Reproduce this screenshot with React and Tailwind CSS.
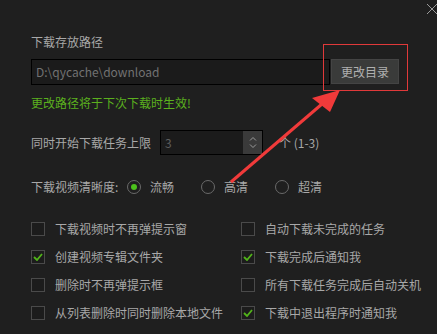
import React from 'react';

const font = { fontFamily: '"Noto Sans CJK SC", "Liberation Sans", sans-serif' };

const Check = ({ checked, label }) => (
  <div className="flex items-center h-[28px]">
    <div className="w-[14px] h-[14px] border border-[#4a4a4a] bg-[#1c1c1c] flex items-center justify-center shrink-0">
      {checked && (
        <svg width="10" height="8" viewBox="0 0 10 8">
          <path d="M1 4l3 3 5-6" fill="none" stroke="#52b41a" strokeWidth="1.8" />
        </svg>
      )}
    </div>
    <span className="ml-[10px] text-[12px] leading-4 text-[#a8a8a8] whitespace-nowrap">{label}</span>
  </div>
);

const Radio = ({ checked, label }) => (
  <div className="flex items-center">
    <div className="w-[14px] h-[14px] rounded-full border-[1.5px] border-[#6a6a6a] flex items-center justify-center">
      {checked && <div className="w-[6px] h-[6px] rounded-full bg-[#4cc21c]" />}
    </div>
    <span className="ml-[9px] text-[12px] leading-4 text-[#a8a8a8]">{label}</span>
  </div>
);

export default function App() {
  const left = ['下载视频时不再弹提示窗', '创建视频专辑文件夹', '删除时不再弹提示框', '从列表删除时同时删除本地文件'];
  const right = ['自动下载未完成的任务', '下载完成后通知我', '所有下载任务完成后自动关机', '下载中退出程序时通知我'];
  const leftOn = [false, true, false, false];
  const rightOn = [false, true, false, true];

  return (
    <div className="relative w-[437px] h-[334px] overflow-hidden bg-[#1f1f1f]" style={font}>
      {/* close */}
      <svg className="absolute left-[426px] top-[3px]" width="12" height="12" viewBox="0 0 12 12">
        <path d="M1 1l10 10M11 1L1 11" stroke="#9a9a9a" strokeWidth="1" />
      </svg>

      <div className="flex flex-col pl-[31px] pt-[34px]">
        <div className="text-[12px] leading-4 text-[#a8a8a8]">下载存放路径</div>

        <div className="flex mt-[9px]">
          <div className="w-[299px] h-[26px] border border-black bg-[#1b1b1b] flex items-center pl-[4px] text-[12px] text-[#727272]">
            D:\qycache\download
          </div>
          <div className="w-[68px] h-[25px] ml-[1px] bg-[#3a3b3a] border border-[#444] flex items-center justify-center text-[12px] text-[#b0b0b0]">
            更改目录
          </div>
        </div>

        <div className="mt-[10px] text-[12px] leading-4 text-[#5bb01e]">更改路径将于下次下载时生效!</div>

        <div className="flex items-center mt-[19px] h-[25px]">
          <span className="text-[12px] leading-4 text-[#a8a8a8] w-[129px]">同时开始下载任务上限</span>
          <div className="w-[103px] h-[25px] border border-black bg-[#1b1b1b] flex">
            <div className="flex-1 flex items-center pl-[4px] text-[12px] text-[#5e5e5e]">3</div>
            <div className="w-[19px] h-full bg-[#3a3a3a] flex flex-col items-center justify-center gap-[3px]">
              <svg width="8" height="5" viewBox="0 0 8 5"><path d="M1 4.5L4 1.5l3 3" fill="none" stroke="#9a9a9a" /></svg>
              <svg width="8" height="5" viewBox="0 0 8 5"><path d="M1 0.5L4 3.5l3-3" fill="none" stroke="#9a9a9a" /></svg>
            </div>
          </div>
          <span className="ml-[16px] text-[12px] text-[#a8a8a8]">个 (1-3)</span>
        </div>

        <div className="flex items-center mt-[22px] h-[20px]">
          <span className="text-[12px] leading-4 text-[#a8a8a8] w-[96px]">下载视频清晰度:</span>
          <div className="w-[74px]"><Radio checked label="流畅" /></div>
          <div className="w-[74px]"><Radio label="高清" /></div>
          <Radio label="超清" />
        </div>

        <div className="grid grid-cols-[210px_1fr] mt-[18px]">
          {left.map((l, i) => (
            <React.Fragment key={i}>
              <Check checked={leftOn[i]} label={l} />
              <Check checked={rightOn[i]} label={right[i]} />
            </React.Fragment>
          ))}
        </div>
      </div>

      {/* annotation */}
      <div className="absolute left-[323px] top-[44px] w-[85px] h-[47px] border border-[#e0393a]" />
      <svg className="absolute left-0 top-0 pointer-events-none" width="437" height="334">
        <line x1="231" y1="182" x2="322" y2="104" stroke="#f03a3a" strokeWidth="3" />
        <polygon points="340,90 312,98 330,112" fill="#f03a3a" />
      </svg>
    </div>
  );
}
